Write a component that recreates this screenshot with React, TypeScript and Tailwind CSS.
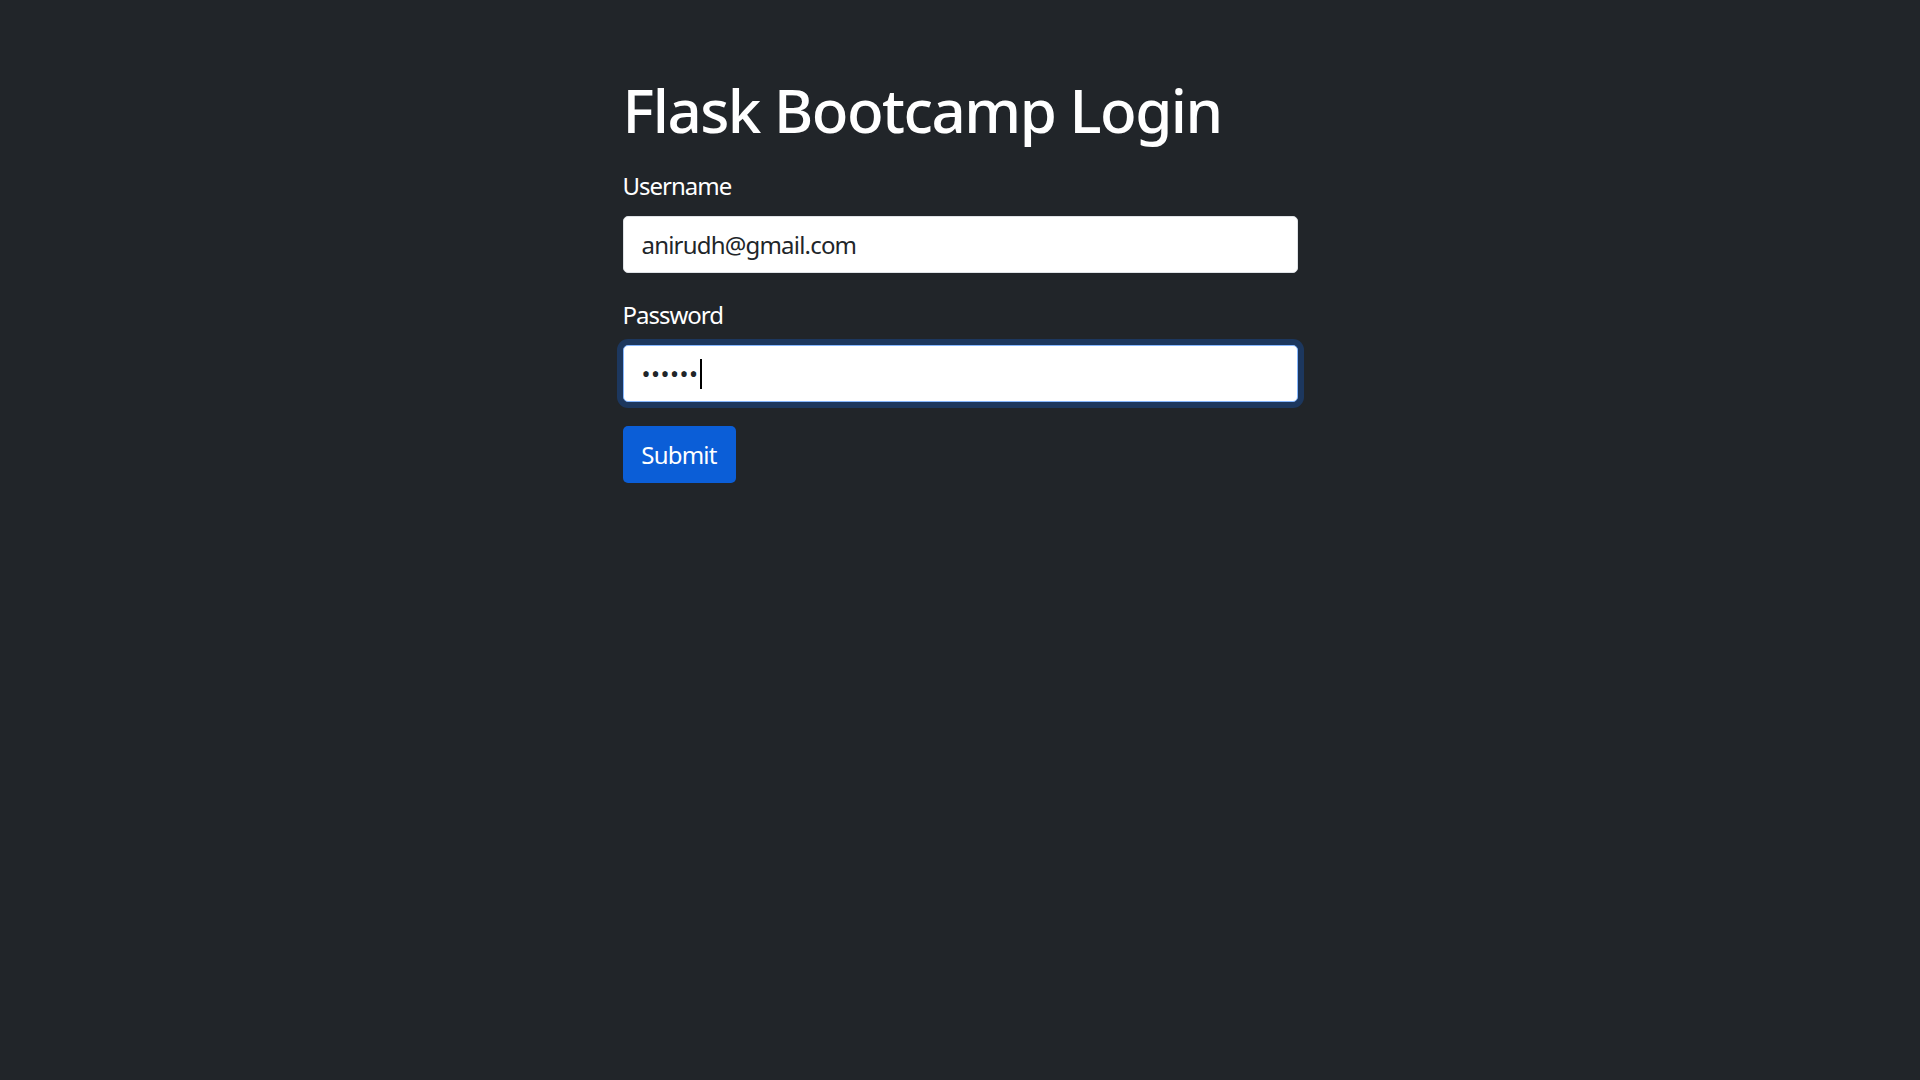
export default function App() {
  return (
    <div className="min-h-screen w-full bg-[#212529] text-[#f8f9fa]" style={{ fontFamily: '"Noto Sans", "Open Sans", sans-serif' }}>
      <div className="mx-auto w-[675px] pt-[74px]">
        <h1 className="mb-[22px] text-[60px] font-medium leading-[72px] tracking-[-1.5px] text-white">Flask Bootcamp Login</h1>
        <form className="flex flex-col" onSubmit={(e) => e.preventDefault()}>
          <label className="mb-[12px] text-[24px] leading-[36px] tracking-[-1px] text-white">Username</label>
          <div className="mb-[24px] flex h-[57px] items-center rounded-[5px] border border-[#dee2e6] bg-white px-[18px] text-[24px] tracking-[-0.8px] text-[#212529]">
            anirudh@gmail.com
          </div>
          <label className="mb-[12px] text-[24px] leading-[36px] tracking-[-1px] text-white">Password</label>
          <div className="mb-[24px] flex h-[57px] items-center rounded-[5px] border border-[#86b7fe] bg-white px-[18px] text-[24px] text-[#212529] shadow-[0_0_0_6px_#1c375e]">
            <span className="tracking-[0.5px]">••••••</span>
            <span className="ml-[1px] inline-block h-[30px] w-[2px] bg-black" />
          </div>
          <div>
            <button type="submit" className="flex h-[57px] w-[113px] items-center justify-center rounded-[5px] bg-[#0b5ed7] text-[24px] tracking-[-0.8px] text-white">
              Submit
            </button>
          </div>
        </form>
      </div>
    </div>
  );
}
